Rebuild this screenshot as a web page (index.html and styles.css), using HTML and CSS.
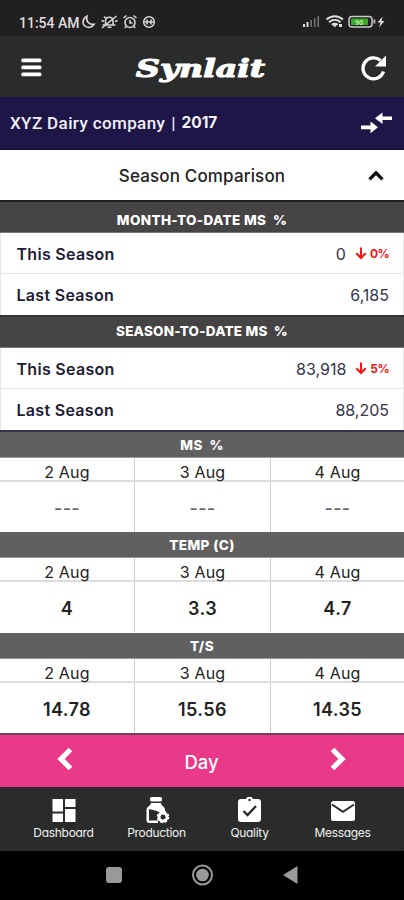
FILE: index.html
```html
<!DOCTYPE html>
<html lang="en">
<head>
<meta charset="utf-8">
<title>Synlait</title>
<link rel="stylesheet" href="styles.css">
</head>
<body>
<div class="status">
  <span class="clock">11:54 AM</span>
  <svg class="status-left" width="76" height="16" viewBox="0 0 76 16" fill="none" stroke="#d6d6d6" stroke-width="1.6">
    <path d="M6 2.2C1.5 4.5.8 9.5 4 12c3 2.500 7.500 1.500 9.200-1.800C7.500 11.200 4.600 6.800 6 2.200Z"/>
    <path d="M21.500 11h13M24.500 10.500V7c0-5 7.500-5 7.500 0v3.500M26.500 13.300h4M21 14 35.500 2M20.500 6.500l2.500 1M36.500 6.500 34 7.500M23 2.500l2 2"/>
    <circle cx="49" cy="8.500" r="5"/><path d="M49 6v3h2.500M42.500 4l3-2.500M52.500 1.500l3 2.500M45 12.500l-1.200 1.500M53 12.500l1.200 1.500"/>
    <circle cx="68" cy="8" r="5.300"/><path d="M63.500 8h9M66 5.500v5M70 5.500v5"/>
  </svg>
  <svg class="status-right" width="84" height="16" viewBox="0 0 84 16">
    <path d="M1 13v-3h2v3zM4.500 13V8h2v5z" fill="#ddd"/><path d="M8.500 13V6h1.500v7zM12 13V4h1.500v9zM15.500 13V2H17v11z" fill="#777"/>
    <g fill="none" stroke="#e0e0e0" stroke-width="2"><path d="M24.500 5.500c5-4.500 11.500-4.500 16.500 0M27 8.200c3.500-3 8-3 11.500 0M29.800 10.800c2-1.500 4-1.500 6 0"/></g><path d="m30.500 10.500 2.300 3 2.300-3zM37 10h3v3h-3z" fill="#ddd"/>
    <rect x="47" y="2.500" width="23" height="10.500" rx="3" fill="#222" stroke="#ccc" stroke-width="1.500"/><rect x="49" y="4.500" width="17" height="6.500" rx="1" fill="#39a829"/><path d="M71.500 5.500h1.800v4h-1.800z" fill="#ccc"/>
    <text x="53" y="10.500" class="battery-text">90</text>
    <path d="m80.500 2.500-5 6h3l-1.500 5 5.500-6.500h-3z" fill="#ddd"/>
  </svg>
</div>
<header class="header">
  <svg class="menu-icon" width="21" height="19" viewBox="0 0 21 19" fill="#fff"><rect x=".3" y=".5" width="20.200" height="3.800" rx="1.500"/><rect x=".3" y="7.500" width="20.200" height="3.800" rx="1.500"/><rect x=".3" y="14.400" width="20.200" height="3.800" rx="1.500"/></svg>
  <svg class="logo" width="140" height="38" viewBox="0 0 140 38"><text x="4" y="26" textLength="129" lengthAdjust="spacingAndGlyphs">Synlait</text></svg>
  <svg class="refresh" width="27" height="28" viewBox="0 0 27 28"><path d="M23.500 17.500A10.500 10.500 0 1 1 20.500 6.500" fill="none" stroke="#fff" stroke-width="3.300"/><path d="M26 1.500V12.500H15z" fill="#fff"/></svg>
</header>
<div class="company">
  <span class="company-name">XYZ Dairy company</span><span class="bar">|</span><span class="year">2017</span>
  <svg class="swap" width="33" height="22" viewBox="0 0 33 22" fill="#fff"><path d="M1 13.500h9.500V9.500L18 15.200l-7.500 6v-4H1zM32 4.500h-9.500V.5L15 6.300l7.500 5.700V8H32z"/></svg>
</div>
<div class="season-title"><span>Season Comparison</span><svg class="up" width="16" height="11" viewBox="0 0 16 11"><path d="m1.500 9.300 6.500-6.500 6.500 6.500" fill="none" stroke="#111" stroke-width="3.300"/></svg></div>

<section class="season">
  <h2 class="month">MONTH-TO-DATE MS &nbsp;%</h2>
  <div class="row"><b>This Season</b><span class="num">0</span><svg class="down" width="12" height="13" viewBox="0 0 12 13"><path d="M6 .5v10M1.300 6.200 6 11l4.700-4.800" fill="none" stroke="#f31414" stroke-width="2"/></svg><em>0%</em></div>
  <div class="row"><b>Last Season</b><span class="num">6,185</span></div>
</section>
<section class="season">
  <h2 class="to-date">SEASON-TO-DATE MS &nbsp;%</h2>
  <div class="row"><b>This Season</b><span class="num">83,918</span><svg class="down" width="12" height="13" viewBox="0 0 12 13"><path d="M6 .5v10M1.300 6.200 6 11l4.700-4.800" fill="none" stroke="#f31414" stroke-width="2"/></svg><em>5%</em></div>
  <div class="row"><b>Last Season</b><span class="num">88,205</span></div>
</section>

<section class="days first">
  <h3>MS &nbsp;%</h3>
  <div class="dates"><span>2 Aug</span><span>3 Aug</span><span>4 Aug</span></div>
  <div class="values empty"><span>---</span><span>---</span><span>---</span></div>
</section>
<section class="days">
  <h3>TEMP (C)</h3>
  <div class="dates"><span>2 Aug</span><span>3 Aug</span><span>4 Aug</span></div>
  <div class="values"><span>4</span><span>3.3</span><span>4.7</span></div>
</section>
<section class="days">
  <h3>T/S</h3>
  <div class="dates"><span>2 Aug</span><span>3 Aug</span><span>4 Aug</span></div>
  <div class="values"><span>14.78</span><span>15.56</span><span>14.35</span></div>
</section>

<div class="pager">
  <svg width="18" height="24" viewBox="0 0 18 24"><path d="m14.500 2.500-9.500 9.500 9.500 9.500" fill="none" stroke="#fff" stroke-width="5.300"/></svg>
  <span>Day</span>
  <svg width="18" height="24" viewBox="0 0 18 24"><path d="m3.500 2.500 9.500 9.500-9.500 9.500" fill="none" stroke="#fff" stroke-width="5.300"/></svg>
</div>
<nav class="tabs">
  <div class="tab dashboard"><svg width="26" height="28" viewBox="0 0 26 28" fill="#fff"><path d="M1.500 3h10.500v12.500H1.500zM14 3h10.500v8H14zM1.500 17.500h10.500V26H1.500zM14 13h10.500v13H14z"/></svg><span>Dashboard</span></div>
  <div class="tab production"><svg width="26" height="28" viewBox="0 0 26 28"><rect x="6" y="1" width="12" height="4.500" rx="1.500" fill="#fff"/><path d="M7 7h10c0 2.500 4 3.500 4 7v4h-3l-5-3-8-2v11.500h9V27H5c-1.500 0-2.500-1-2.500-2.500V14c0-3.500 4.500-4.500 4.500-7Z" fill="#fff"/><circle cx="19" cy="21" r="4" fill="none" stroke="#fff" stroke-width="3"/><circle cx="19" cy="21" r="5.300" fill="none" stroke="#fff" stroke-width="2" stroke-dasharray="2.200 2"/></svg><span>Production</span></div>
  <div class="tab quality"><svg width="26" height="28" viewBox="0 0 26 28"><path d="M4 3h5c1-3 6-3 7 0h5q3 0 3 3v17q0 3-3 3H4q-3 0-3-3V6q0-3 3-3Z" fill="#fff"/><circle cx="12.500" cy="4" r="1.200" fill="#2a2c2b"/><path d="m6.500 15 4 4 8.500-9" fill="none" stroke="#2a2c2b" stroke-width="2.300"/></svg><span>Quality</span></div>
  <div class="tab messages"><svg width="26" height="28" viewBox="0 0 26 28"><rect x="1" y="5" width="24" height="20" rx="2.500" fill="#fff"/><path d="m2 8.500 11 7.300 11-7.300" fill="none" stroke="#2a2c2b" stroke-width="2"/></svg><span>Messages</span></div>
</nav>
<div class="system">
  <svg width="404" height="49" viewBox="0 0 404 49"><rect x="106" y="16" width="16" height="16" rx="3" fill="#999"/><circle cx="202.500" cy="24" r="9.500" fill="none" stroke="#999" stroke-width="2"/><circle cx="202.500" cy="24" r="6.300" fill="#999"/><path d="M297.500 15v18L283 24z" fill="#999"/></svg>
</div>
</body>
</html>
```
FILE: styles.css
```css
* { box-sizing: border-box; }
body { margin: 0; width: 404px; height: 900px; overflow: hidden; background: #fff; color: #222; font-family: Inter, "Liberation Sans", sans-serif; }
svg { display: block; flex: none; }
span, b, em { white-space: nowrap; }
.status { height: 36px; background: #211f20; display: flex; align-items: center; padding: 8px 18px 0 19px; }
.clock { width: 62px; padding-top: 2px; color: #dedede; font: 500 14px/18px Roboto, sans-serif; letter-spacing: 0; }
.status-right { margin-left: auto; }
.battery-text { font: 700 7px Roboto, sans-serif; fill: #b9f5a8; }
.header { height: 61px; background: #2a2c2b; display: flex; align-items: center; justify-content: space-between; padding: 3px 17px 0 21px; }
.logo { margin: 3px 0 0 2px; overflow: visible; }
.logo text { font: italic 700 25px "DejaVu Serif", serif; fill: #fff; stroke: #fff; stroke-width: 1.2px; stroke-linejoin: round; }
.menu-icon { margin-top: -2px; }
.company { height: 53px; background: #1f1648; border-bottom: 1px solid #151032; color: #f2f0f6; display: flex; align-items: center; padding: 0 11px 0 10px; font: 500 17px/24px Roboto, sans-serif; }
.company-name { letter-spacing: .38px; }
.bar { margin: 0 6px 0 6px; }
.year { font: 700 15.5px/24px Inter, sans-serif; }
.swap { margin-left: auto; }
.season-title { height: 50px; display: flex; align-items: center; justify-content: center; position: relative; padding-top: 2px; font-size: 17px; font-weight: 500; letter-spacing: .15px; }
.up { position: absolute; right: 20px; top: 20px; }
h2, h3 { margin: 0; color: #fff; text-align: center; font-weight: 800; }
h2 { height: 33px; padding-top: 5px; background: #454344; border-top: 2px solid #222; border-bottom: 1px solid #777; font-size: 13.5px; line-height: 27px; letter-spacing: .35px; }
.to-date { padding-top: 1px; border-top-color: #333; letter-spacing: .2px; }
.row { height: 41px; display: flex; align-items: center; padding: 2px 14px 0 15.500px; border: 1px solid #e7e7e7; border-top: 0; font-size: 16px; }
.row + .row { padding-top: 0; border-bottom: 0; }
.row b { font-weight: 600; color: #201c35; letter-spacing: .3px; }
.num { margin-left: auto; color: #35344a; }
.down { margin: -1px 3px 0 9px; }
.row em { color: #f31414; font: 700 12px/16px Inter, sans-serif; letter-spacing: -.6px; }
.days { height: 100.500px; }
.first { height: 102px; border-top: 2px solid #35334b; }
h3 { height: 26px; background: #606060; border-bottom: 1px solid #999; font-size: 13.5px; line-height: 26px; letter-spacing: .4px; }
.dates, .values { display: grid; grid-template-columns: 135px 136px 133px; text-align: center; }
.dates span, .values span { border-right: 1px solid #ccc; }
.dates span:last-child, .values span:last-child { border-right: 0; }
.dates { height: 24px; border-bottom: 2px solid #ddd; font-size: 16px; line-height: 29px; letter-spacing: .2px; }
.dates span { height: 22px; }
.values { height: 50.500px; font-size: 18px; font-weight: 600; line-height: 53px; letter-spacing: .4px; }
.values span { height: 50px; }
.empty { color: #666; font-weight: 500; }
.pager { height: 54px; background: #e93988; border-top: 2px solid #6d435c; color: #fff; display: flex; align-items: center; justify-content: space-between; padding: 0 57px 0 56px; font-size: 18.5px; font-weight: 500; }
.pager span { padding-top: 2px; }
.pager svg { margin-top: -4px; }
.tabs { height: 64px; background: #2a2c2b; display: grid; grid-template-columns: 93px 93px 93px 93px; padding: 9px 0 0 17px; color: #f1f1f1; }
.tab { display: flex; flex-direction: column; align-items: center; font-size: 12px; line-height: 17px; font-feature-settings: "cv11"; letter-spacing: -.3px; }
.system { height: 49px; background: #000; }
```
